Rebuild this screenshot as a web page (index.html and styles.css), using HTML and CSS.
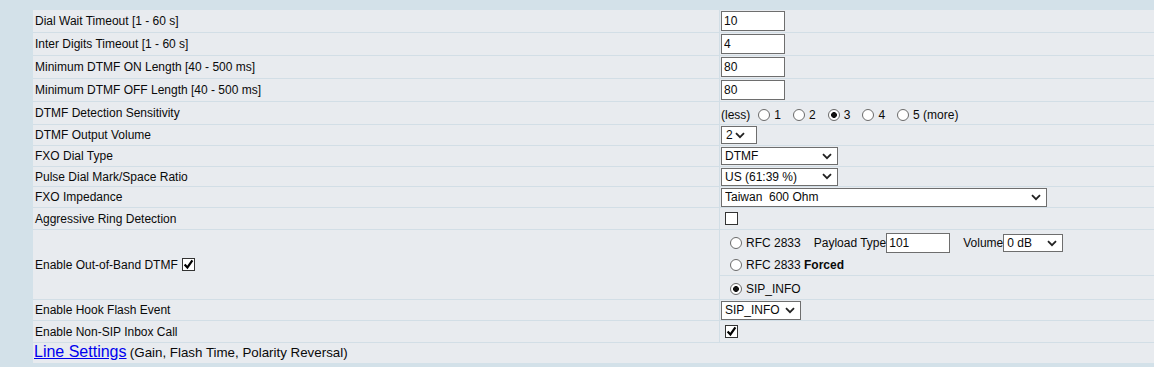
FILE: index.html
```html
<!DOCTYPE html>
<html lang="en">
<head>
    <meta charset="UTF-8">
    <meta name="viewport" content="width=device-width, initial-scale=1.0">
    <title>FXO Settings</title>
    <link rel="stylesheet" href="styles.css">
</head>
<body>
    <div class="panel">
        <div class="row field">
            <div class="label">Dial Wait Timeout [1 - 60 s]</div>
            <div class="value"><input class="num" value="10"></div>
        </div>
        <div class="row field">
            <div class="label">Inter Digits Timeout [1 - 60 s]</div>
            <div class="value"><input class="num" value="4"></div>
        </div>
        <div class="row field">
            <div class="label">Minimum DTMF ON Length [40 - 500 ms]</div>
            <div class="value"><input class="num" value="80"></div>
        </div>
        <div class="row field">
            <div class="label">Minimum DTMF OFF Length [40 - 500 ms]</div>
            <div class="value"><input class="num" value="80"></div>
        </div>
        <div class="row field">
            <div class="label">DTMF Detection Sensitivity</div>
            <div class="value sens">(less)
                <label class="opt"><input type="radio" name="sens">1</label>
                <label class="opt"><input type="radio" name="sens">2</label>
                <label class="opt"><input type="radio" name="sens" checked>3</label>
                <label class="opt"><input type="radio" name="sens">4</label>
                <label class="opt"><input type="radio" name="sens">5 (more)</label>
            </div>
        </div>
        <div class="row">
            <div class="label">DTMF Output Volume</div>
            <div class="value">
                <select class="sel sel-vol"><option>2</option></select>
            </div>
        </div>
        <div class="row">
            <div class="label">FXO Dial Type</div>
            <div class="value">
                <select class="sel sel-mid"><option>DTMF</option></select>
            </div>
        </div>
        <div class="row short">
            <div class="label">Pulse Dial Mark/Space Ratio</div>
            <div class="value">
                <select class="sel sel-mid"><option>US (61:39 %)</option></select>
            </div>
        </div>
        <div class="row">
            <div class="label">FXO Impedance</div>
            <div class="value">
                <select class="sel sel-wide"><option>Taiwan&nbsp; 600 Ohm</option></select>
            </div>
        </div>
        <div class="row tall">
            <div class="label">Aggressive Ring Detection</div>
            <div class="value"><input type="checkbox"></div>
        </div>
        <div class="row oob">
            <div class="label">Enable Out-of-Band DTMF <input type="checkbox" checked></div>
            <div class="value oob-value">
                <div class="oob-top">
                    <div class="oob-line">
                        <label class="opt"><input type="radio" name="oob"><span>RFC 2833</span></label>
                        <span class="after">Payload Type</span><input class="num" value="101">
                        <span class="after">Volume</span><select class="sel sel-db"><option>0 dB</option></select>
                    </div>
                    <div class="oob-line">
                        <label class="opt"><input type="radio" name="oob"><span>RFC 2833 <b>Forced</b></span></label>
                    </div>
                </div>
                <div class="oob-bottom">
                    <label class="opt"><input type="radio" name="oob" checked><span>SIP_INFO</span></label>
                </div>
            </div>
        </div>
        <div class="row">
            <div class="label">Enable Hook Flash Event</div>
            <div class="value">
                <select class="sel sel-sip"><option>SIP_INFO</option></select>
            </div>
        </div>
        <div class="row tall">
            <div class="label">Enable Non-SIP Inbox Call</div>
            <div class="value"><input type="checkbox" checked></div>
        </div>
        <div class="footer">
            <a href="#">Line Settings</a>&nbsp;<span>(Gain, Flash Time, Polarity Reversal)</span>
        </div>
    </div>
</body>
</html>
```

FILE: styles.css
```css
body { margin: 0; background: #d3e1e9; font-family: "Liberation Sans", Arial, sans-serif; font-size: 12px; color: #0a0a0a; }
.panel { margin: 10px 0 0 33px; background: #e8ebef; }

.row { display: grid; grid-template-columns: 687px 1fr; height: 21px; box-sizing: border-box; border-bottom: 1px solid #d2dee6; }
.row.field { height: 23px; }
.row.short { height: 20px; }
.row.tall { height: 22px; }
.row.oob { height: 70px; }
.label { display: flex; align-items: center; padding-left: 2px; border-right: 1px solid #d2dee6; }
.label input { margin-left: 4px; }
.value { display: flex; align-items: center; padding-left: 1px; }

.num { width: 64px; height: 20px; box-sizing: border-box; border: 1px solid #6e6e6e; border-radius: 0; padding: 0 2px; margin: 0; font: 12px "Liberation Sans", Arial, sans-serif; color: #0a0a0a; background: #fff; }

.sel { appearance: none; -webkit-appearance: none; height: 18px; box-sizing: border-box; border: 1px solid #6e6e6e; border-radius: 0; margin: 0; padding: 0 0 0 3px; font: 12px "Liberation Sans", Arial, sans-serif; color: #0a0a0a; background: #fff url("data:image/svg+xml,%3Csvg xmlns='http://www.w3.org/2000/svg' width='10' height='7'%3E%3Cpath d='M1 1.2l4 4 4-4' fill='none' stroke='%23222' stroke-width='1.8'/%3E%3C/svg%3E") no-repeat right 5px center; }
.sel-vol { width: 36px; padding-left: 4px; background-position: right 11px center; }
.sel-mid { width: 117px; }
.sel-wide { width: 326px; height: 19px; }
.sel-db { width: 60px; }
.sel-sip { width: 80px; height: 19px; }

input[type=radio] { appearance: none; -webkit-appearance: none; width: 12px; height: 12px; margin: 0; border: 1px solid #6a6a6a; border-radius: 50%; background: #fff; }
input[type=radio]:checked { background: radial-gradient(circle, #111 0 2.6px, #fff 3.2px); }
input[type=checkbox] { appearance: none; -webkit-appearance: none; width: 13px; height: 13px; margin: 0 0 0 4px; border: 1px solid #333; border-radius: 0; background: #fff; }
input[type=checkbox]:checked { background: #fff url("data:image/svg+xml,%3Csvg xmlns='http://www.w3.org/2000/svg' width='11' height='11'%3E%3Cpath d='M1.6 5.4l2.8 3 5-7' fill='none' stroke='%23000' stroke-width='2.2'/%3E%3C/svg%3E") no-repeat center; }

.opt { display: inline-flex; align-items: center; gap: 4px; }
.sens { padding-top: 3px; }
.sens .opt { margin-left: 12px; }
.sens .opt:first-of-type { margin-left: 8px; }

.oob-value { flex-direction: column; align-items: stretch; padding-left: 0; }
.oob-top { height: 46px; box-sizing: border-box; padding-top: 2px; border-bottom: 1px solid #d2dee6; }
.oob-line { height: 22px; display: flex; align-items: center; padding-left: 10px; }
.oob-bottom { flex: 1; display: flex; align-items: center; padding: 2px 0 0 10px; }
.after { margin-left: 13px; }

.footer { height: 20px; display: flex; align-items: baseline; padding-left: 1px; }
.footer a { color: #0000ee; font-size: 16px; }
.footer span { font-size: 13.33px; }
```
